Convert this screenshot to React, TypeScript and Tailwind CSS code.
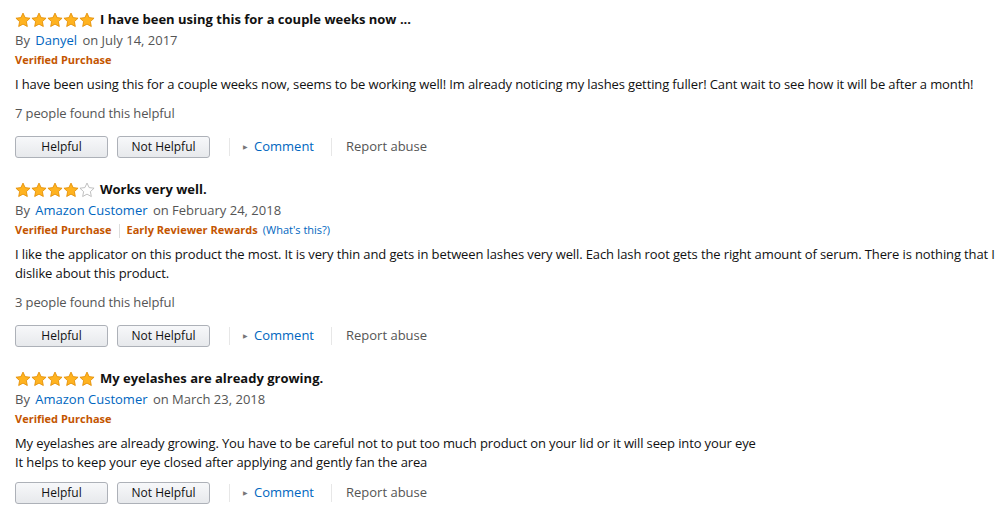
import React from 'react';

interface Review {
  rating: number;
  title: string;
  author: string;
  date: string;
  earlyReviewer?: boolean;
  body: string[];
  helpfulCount?: number;
}

const reviews: Review[] = [
  {
    rating: 5,
    title: 'I have been using this for a couple weeks now ...',
    author: 'Danyel',
    date: 'July 14, 2017',
    body: [
      'I have been using this for a couple weeks now, seems to be working well! Im already noticing my lashes getting fuller! Cant wait to see how it will be after a month!',
    ],
    helpfulCount: 7,
  },
  {
    rating: 4,
    title: 'Works very well.',
    author: 'Amazon Customer',
    date: 'February 24, 2018',
    earlyReviewer: true,
    body: [
      'I like the applicator on this product the most. It is very thin and gets in between lashes very well. Each lash root gets the right amount of serum. There is nothing that I dislike about this product.',
    ],
    helpfulCount: 3,
  },
  {
    rating: 5,
    title: 'My eyelashes are already growing.',
    author: 'Amazon Customer',
    date: 'March 23, 2018',
    body: [
      'My eyelashes are already growing. You have to be careful not to put too much product on your lid or it will seep into your eye',
      'It helps to keep your eye closed after applying and gently fan the area',
    ],
  },
];

const Star = ({ filled }: { filled: boolean }) => (
  <svg width="16" height="16" viewBox="0 0 24 24" className="block">
    <path
      d="M12 1.6l3.2 6.8 7.4.9-5.5 5.1 1.4 7.4L12 18.2l-6.5 3.6 1.4-7.4L1.4 9.3l7.4-.9z"
      fill={filled ? '#ffb320' : '#ffffff'}
      stroke={filled ? '#e08a00' : '#b0b0b0'}
      strokeWidth="1.2"
      strokeLinejoin="round"
    />
  </svg>
);

const Stars = ({ rating }: { rating: number }) => (
  <div className="flex">
    {[1, 2, 3, 4, 5].map((i) => (
      <Star key={i} filled={i <= rating} />
    ))}
  </div>
);

const VoteButton = ({ label, className = '' }: { label: string; className?: string }) => (
  <button
    className={`w-[93px] h-[22px] rounded-[3px] border border-[#adb1b8] bg-gradient-to-b from-[#f7f8fa] to-[#e7e9ec] text-[12px] leading-[20px] text-[#111] ${className}`}
  >
    {label}
  </button>
);

const ReviewItem = ({ review }: { review: Review }) => (
  <div className="mb-[23px]">
    <div className="flex items-center gap-[5px] h-[18px]">
      <Stars rating={review.rating} />
      <span className="text-[13px] font-bold text-[#111]">{review.title}</span>
    </div>
    <div className="mt-[2px] text-[13px] text-[#555] leading-[19px]">
      By <a className="text-[#0066c0] ml-[2px] mr-[2px]">{review.author}</a> on {review.date}
    </div>
    <div className="flex items-center mt-[1px] h-[19px] text-[11px] font-bold text-[#c45500]">
      <span>Verified Purchase</span>
      {review.earlyReviewer && (
        <>
          <span className="mx-[7px] h-[14px] w-px bg-[#ddd]" />
          <span>Early Reviewer Rewards</span>
          <span className="ml-[5px] font-normal text-[#0066c0]">(What's this?)</span>
        </>
      )}
    </div>
    <div className="mt-[5px] text-[13px] leading-[19px] text-[#111] tracking-[-0.12px]">
      {review.body.map((line, i) => (
        <p key={i}>{line}</p>
      ))}
    </div>
    {review.helpfulCount !== undefined && (
      <div className="mt-[10px] text-[13px] leading-[19px] text-[#555] tracking-[-0.12px]">
        {review.helpfulCount} people found this helpful
      </div>
    )}
    <div className={`flex items-center h-[22px] ${review.helpfulCount !== undefined ? 'mt-[13px]' : 'mt-[10px]'}`}>
      <VoteButton label="Helpful" />
      <VoteButton label="Not Helpful" className="ml-[9px]" />
      <span className="ml-[19px] h-[18px] w-px bg-[#e7e7e7]" />
      <span className="ml-[13px] text-[6px] text-[#777]">&#9654;</span>
      <a className="ml-[6px] text-[13px] text-[#0066c0]">Comment</a>
      <span className="ml-[17px] h-[18px] w-px bg-[#e7e7e7]" />
      <a className="ml-[14px] text-[13px] text-[#555]">Report abuse</a>
    </div>
  </div>
);

export default function App() {
  return (
    <div className="w-[1006px] h-[518px] overflow-hidden bg-white pl-[15px] pt-[11px] font-['Open_Sans',sans-serif]">
      {reviews.map((r, i) => (
        <ReviewItem key={i} review={r} />
      ))}
    </div>
  );
}
